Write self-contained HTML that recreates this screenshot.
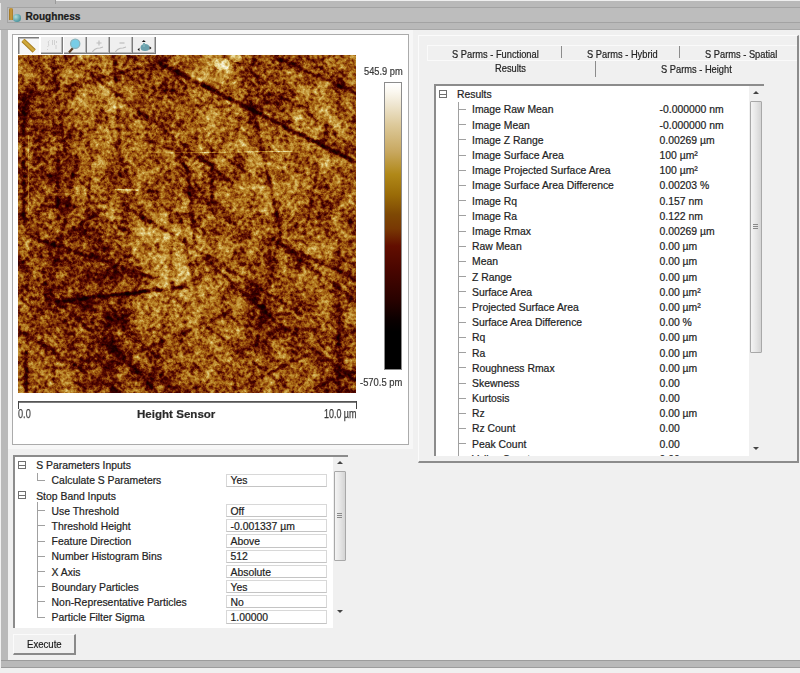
<!DOCTYPE html>
<html><head><meta charset="utf-8">
<style>
*{box-sizing:border-box;margin:0;padding:0}
html,body{width:800px;height:673px;overflow:hidden;background:#f0f0f0;font-family:"Liberation Sans",sans-serif;color:#222}
.a{position:absolute}
.t{position:absolute;white-space:nowrap;line-height:1;-webkit-text-stroke:0.2px currentColor}
.pm{position:absolute;width:8px;height:8px;border:1px solid #707070}
.pm::after{content:"";position:absolute;left:0;top:3px;width:6px;height:1px;background:#707070}
.vb{position:absolute;width:101.5px;height:13.2px;border:1px solid #d8d8d8;border-bottom-color:#c4c4c4}
.tri-up{position:absolute;width:0;height:0;border-left:3px solid transparent;border-right:3px solid transparent;border-bottom:3px solid #444}
.tri-dn{position:absolute;width:0;height:0;border-left:3px solid transparent;border-right:3px solid transparent;border-top:3px solid #444}
.grip{position:absolute;width:5px;height:6px;background:repeating-linear-gradient(180deg,#8a8a8a 0 1px,transparent 1px 2px)}
</style></head><body>
<!-- top gray frame -->
<div class="a" style="left:0;top:0;width:800px;height:30px;background:#b9b9b9"></div>
<div class="a" style="left:56px;top:0;width:744px;height:1px;background:#efefef"></div>
<div class="a" style="left:55px;top:0;width:1px;height:4px;background:#9a9a9a"></div>
<div class="a" style="left:0;top:3px;width:1px;height:17px;background:#eaeaea"></div>
<div class="a" style="left:7px;top:7px;width:793px;height:16px;background:#bdbdbd;border-top:1px solid #a3a3a3;border-bottom:1px solid #a3a3a3;border-left:1px solid #a3a3a3"></div>
<div class="a" style="left:0;top:29px;width:800px;height:1px;background:#a8a8a8"></div>
<!-- left gray strip -->
<div class="a" style="left:1px;top:30px;width:7px;height:637px;background:#b9b9b9"></div>
<div class="a" style="left:0;top:30px;width:1px;height:643px;background:#f0f0f0"></div>
<!-- bottom bar -->
<div class="a" style="left:1px;top:660px;width:799px;height:8px;background:#b9b9b9;border-top:1px solid #9c9c9c;border-bottom:1px solid #9c9c9c"></div>

<!-- title -->
<div class="a" style="left:9px;top:8px;width:3.5px;height:12px;border-radius:1.5px 1.5px 0 0;background:linear-gradient(90deg,#9a7020,#d0a040,#a07828)"></div>
<div class="a" style="left:13px;top:14px;width:7.5px;height:7.5px;border-radius:50%;background:radial-gradient(circle at 35% 35%,#b0dcdc,#5aa0a8 60%,#3a8088)"></div>
<div class="t" style="left:25.5px;top:12px;font-size:10.1px;font-weight:bold;color:#1a1a1a">Roughness</div>

<!-- image panel -->
<div class="a" style="left:8px;top:30px;width:405px;height:419px;background:#f7f7f7"></div>
<div class="a" style="left:12px;top:34px;width:397px;height:411px;background:#fff;border:1px solid #ababab"></div>

<!--AFM--><svg class="a" style="left:18px;top:55px" width="338" height="338" viewBox="0 0 338 338">
<defs>
<filter id="afmb" x="-40" y="-40" width="418" height="418" filterUnits="userSpaceOnUse" color-interpolation-filters="sRGB">
<feGaussianBlur in="SourceGraphic" stdDeviation="11"/>
</filter>
<filter id="afml" x="-40" y="-40" width="418" height="418" filterUnits="userSpaceOnUse" color-interpolation-filters="sRGB">
<feGaussianBlur in="SourceGraphic" stdDeviation="0.9"/>
</filter>
<filter id="afml2" x="-40" y="-40" width="418" height="418" filterUnits="userSpaceOnUse" color-interpolation-filters="sRGB">
<feGaussianBlur in="SourceGraphic" stdDeviation="0.4"/>
</filter>
<filter id="afmf" x="0" y="0" width="338" height="338" filterUnits="userSpaceOnUse" color-interpolation-filters="sRGB">
<feTurbulence type="fractalNoise" baseFrequency="0.26" numOctaves="3" seed="7" result="n1"/>
<feColorMatrix in="n1" type="matrix" values="1 0 0 0 0 1 0 0 0 0 1 0 0 0 0 0 0 0 0 1" result="g1"/>
<feTurbulence type="fractalNoise" baseFrequency="0.07" numOctaves="2" seed="3" result="n2"/>
<feColorMatrix in="n2" type="matrix" values="1 0 0 0 0 1 0 0 0 0 1 0 0 0 0 0 0 0 0 1" result="g2"/>
<feComposite in="g1" in2="g2" operator="arithmetic" k1="0" k2="0.5" k3="0.38" k4="0" result="h1"/>
<feComposite in="h1" in2="SourceGraphic" operator="arithmetic" k1="0" k2="1" k3="0.8" k4="-0.272" result="h"/>
<feComponentTransfer in="h" result="m"><feFuncR type="table" tableValues="0.000 0.010 0.020 0.031 0.041 0.051 0.061 0.071 0.082 0.092 0.102 0.131 0.159 0.188 0.217 0.245 0.282 0.322 0.361 0.416 0.471 0.520 0.569 0.612 0.651 0.690 0.721 0.749 0.777 0.805 0.827 0.850 0.872 0.895 0.918 0.931 0.945 0.959 0.973 0.986 1.000"/><feFuncG type="table" tableValues="0.000 0.000 0.000 0.000 0.000 0.000 0.000 0.000 0.000 0.000 0.000 0.000 0.000 0.000 0.000 0.000 0.016 0.035 0.055 0.114 0.173 0.228 0.284 0.341 0.400 0.459 0.507 0.553 0.599 0.644 0.688 0.732 0.775 0.819 0.863 0.886 0.908 0.931 0.954 0.977 1.000"/><feFuncB type="table" tableValues="0.000 0.000 0.000 0.000 0.000 0.000 0.000 0.000 0.000 0.000 0.000 0.000 0.000 0.000 0.000 0.000 0.002 0.005 0.008 0.020 0.031 0.038 0.044 0.062 0.087 0.113 0.153 0.196 0.240 0.287 0.352 0.417 0.482 0.547 0.612 0.676 0.741 0.806 0.871 0.935 1.000"/></feComponentTransfer>
<feGaussianBlur in="m" stdDeviation="0.5"/>
</filter>
</defs>
<g filter="url(#afmf)"><g filter="url(#afmb)"><rect x="-28.2" y="-28.2" width="28.7" height="28.7" fill="rgb(128,128,128)"/><rect x="0.0" y="-28.2" width="28.7" height="28.7" fill="rgb(128,128,128)"/><rect x="28.2" y="-28.2" width="28.7" height="28.7" fill="rgb(115,115,115)"/><rect x="56.3" y="-28.2" width="28.7" height="28.7" fill="rgb(140,140,140)"/><rect x="84.5" y="-28.2" width="28.7" height="28.7" fill="rgb(140,140,140)"/><rect x="112.7" y="-28.2" width="28.7" height="28.7" fill="rgb(102,102,102)"/><rect x="140.8" y="-28.2" width="28.7" height="28.7" fill="rgb(115,115,115)"/><rect x="169.0" y="-28.2" width="28.7" height="28.7" fill="rgb(153,153,153)"/><rect x="197.2" y="-28.2" width="28.7" height="28.7" fill="rgb(153,153,153)"/><rect x="225.3" y="-28.2" width="28.7" height="28.7" fill="rgb(115,115,115)"/><rect x="253.5" y="-28.2" width="28.7" height="28.7" fill="rgb(128,128,128)"/><rect x="281.7" y="-28.2" width="28.7" height="28.7" fill="rgb(128,128,128)"/><rect x="309.8" y="-28.2" width="28.7" height="28.7" fill="rgb(128,128,128)"/><rect x="338.0" y="-28.2" width="28.7" height="28.7" fill="rgb(128,128,128)"/><rect x="-28.2" y="0.0" width="28.7" height="28.7" fill="rgb(128,128,128)"/><rect x="0.0" y="0.0" width="28.7" height="28.7" fill="rgb(128,128,128)"/><rect x="28.2" y="0.0" width="28.7" height="28.7" fill="rgb(115,115,115)"/><rect x="56.3" y="0.0" width="28.7" height="28.7" fill="rgb(140,140,140)"/><rect x="84.5" y="0.0" width="28.7" height="28.7" fill="rgb(140,140,140)"/><rect x="112.7" y="0.0" width="28.7" height="28.7" fill="rgb(102,102,102)"/><rect x="140.8" y="0.0" width="28.7" height="28.7" fill="rgb(115,115,115)"/><rect x="169.0" y="0.0" width="28.7" height="28.7" fill="rgb(153,153,153)"/><rect x="197.2" y="0.0" width="28.7" height="28.7" fill="rgb(153,153,153)"/><rect x="225.3" y="0.0" width="28.7" height="28.7" fill="rgb(115,115,115)"/><rect x="253.5" y="0.0" width="28.7" height="28.7" fill="rgb(128,128,128)"/><rect x="281.7" y="0.0" width="28.7" height="28.7" fill="rgb(128,128,128)"/><rect x="309.8" y="0.0" width="28.7" height="28.7" fill="rgb(128,128,128)"/><rect x="338.0" y="0.0" width="28.7" height="28.7" fill="rgb(128,128,128)"/><rect x="-28.2" y="28.2" width="28.7" height="28.7" fill="rgb(89,89,89)"/><rect x="0.0" y="28.2" width="28.7" height="28.7" fill="rgb(89,89,89)"/><rect x="28.2" y="28.2" width="28.7" height="28.7" fill="rgb(128,128,128)"/><rect x="56.3" y="28.2" width="28.7" height="28.7" fill="rgb(140,140,140)"/><rect x="84.5" y="28.2" width="28.7" height="28.7" fill="rgb(166,166,166)"/><rect x="112.7" y="28.2" width="28.7" height="28.7" fill="rgb(115,115,115)"/><rect x="140.8" y="28.2" width="28.7" height="28.7" fill="rgb(115,115,115)"/><rect x="169.0" y="28.2" width="28.7" height="28.7" fill="rgb(153,153,153)"/><rect x="197.2" y="28.2" width="28.7" height="28.7" fill="rgb(140,140,140)"/><rect x="225.3" y="28.2" width="28.7" height="28.7" fill="rgb(102,102,102)"/><rect x="253.5" y="28.2" width="28.7" height="28.7" fill="rgb(115,115,115)"/><rect x="281.7" y="28.2" width="28.7" height="28.7" fill="rgb(153,153,153)"/><rect x="309.8" y="28.2" width="28.7" height="28.7" fill="rgb(128,128,128)"/><rect x="338.0" y="28.2" width="28.7" height="28.7" fill="rgb(128,128,128)"/><rect x="-28.2" y="56.3" width="28.7" height="28.7" fill="rgb(102,102,102)"/><rect x="0.0" y="56.3" width="28.7" height="28.7" fill="rgb(102,102,102)"/><rect x="28.2" y="56.3" width="28.7" height="28.7" fill="rgb(115,115,115)"/><rect x="56.3" y="56.3" width="28.7" height="28.7" fill="rgb(140,140,140)"/><rect x="84.5" y="56.3" width="28.7" height="28.7" fill="rgb(153,153,153)"/><rect x="112.7" y="56.3" width="28.7" height="28.7" fill="rgb(128,128,128)"/><rect x="140.8" y="56.3" width="28.7" height="28.7" fill="rgb(115,115,115)"/><rect x="169.0" y="56.3" width="28.7" height="28.7" fill="rgb(140,140,140)"/><rect x="197.2" y="56.3" width="28.7" height="28.7" fill="rgb(153,153,153)"/><rect x="225.3" y="56.3" width="28.7" height="28.7" fill="rgb(128,128,128)"/><rect x="253.5" y="56.3" width="28.7" height="28.7" fill="rgb(140,140,140)"/><rect x="281.7" y="56.3" width="28.7" height="28.7" fill="rgb(166,166,166)"/><rect x="309.8" y="56.3" width="28.7" height="28.7" fill="rgb(140,140,140)"/><rect x="338.0" y="56.3" width="28.7" height="28.7" fill="rgb(140,140,140)"/><rect x="-28.2" y="84.5" width="28.7" height="28.7" fill="rgb(115,115,115)"/><rect x="0.0" y="84.5" width="28.7" height="28.7" fill="rgb(115,115,115)"/><rect x="28.2" y="84.5" width="28.7" height="28.7" fill="rgb(102,102,102)"/><rect x="56.3" y="84.5" width="28.7" height="28.7" fill="rgb(153,153,153)"/><rect x="84.5" y="84.5" width="28.7" height="28.7" fill="rgb(140,140,140)"/><rect x="112.7" y="84.5" width="28.7" height="28.7" fill="rgb(128,128,128)"/><rect x="140.8" y="84.5" width="28.7" height="28.7" fill="rgb(140,140,140)"/><rect x="169.0" y="84.5" width="28.7" height="28.7" fill="rgb(128,128,128)"/><rect x="197.2" y="84.5" width="28.7" height="28.7" fill="rgb(140,140,140)"/><rect x="225.3" y="84.5" width="28.7" height="28.7" fill="rgb(140,140,140)"/><rect x="253.5" y="84.5" width="28.7" height="28.7" fill="rgb(140,140,140)"/><rect x="281.7" y="84.5" width="28.7" height="28.7" fill="rgb(140,140,140)"/><rect x="309.8" y="84.5" width="28.7" height="28.7" fill="rgb(128,128,128)"/><rect x="338.0" y="84.5" width="28.7" height="28.7" fill="rgb(128,128,128)"/><rect x="-28.2" y="112.7" width="28.7" height="28.7" fill="rgb(115,115,115)"/><rect x="0.0" y="112.7" width="28.7" height="28.7" fill="rgb(115,115,115)"/><rect x="28.2" y="112.7" width="28.7" height="28.7" fill="rgb(115,115,115)"/><rect x="56.3" y="112.7" width="28.7" height="28.7" fill="rgb(128,128,128)"/><rect x="84.5" y="112.7" width="28.7" height="28.7" fill="rgb(115,115,115)"/><rect x="112.7" y="112.7" width="28.7" height="28.7" fill="rgb(128,128,128)"/><rect x="140.8" y="112.7" width="28.7" height="28.7" fill="rgb(128,128,128)"/><rect x="169.0" y="112.7" width="28.7" height="28.7" fill="rgb(115,115,115)"/><rect x="197.2" y="112.7" width="28.7" height="28.7" fill="rgb(128,128,128)"/><rect x="225.3" y="112.7" width="28.7" height="28.7" fill="rgb(153,153,153)"/><rect x="253.5" y="112.7" width="28.7" height="28.7" fill="rgb(153,153,153)"/><rect x="281.7" y="112.7" width="28.7" height="28.7" fill="rgb(128,128,128)"/><rect x="309.8" y="112.7" width="28.7" height="28.7" fill="rgb(128,128,128)"/><rect x="338.0" y="112.7" width="28.7" height="28.7" fill="rgb(128,128,128)"/><rect x="-28.2" y="140.8" width="28.7" height="28.7" fill="rgb(128,128,128)"/><rect x="0.0" y="140.8" width="28.7" height="28.7" fill="rgb(128,128,128)"/><rect x="28.2" y="140.8" width="28.7" height="28.7" fill="rgb(115,115,115)"/><rect x="56.3" y="140.8" width="28.7" height="28.7" fill="rgb(128,128,128)"/><rect x="84.5" y="140.8" width="28.7" height="28.7" fill="rgb(140,140,140)"/><rect x="112.7" y="140.8" width="28.7" height="28.7" fill="rgb(128,128,128)"/><rect x="140.8" y="140.8" width="28.7" height="28.7" fill="rgb(128,128,128)"/><rect x="169.0" y="140.8" width="28.7" height="28.7" fill="rgb(128,128,128)"/><rect x="197.2" y="140.8" width="28.7" height="28.7" fill="rgb(128,128,128)"/><rect x="225.3" y="140.8" width="28.7" height="28.7" fill="rgb(140,140,140)"/><rect x="253.5" y="140.8" width="28.7" height="28.7" fill="rgb(140,140,140)"/><rect x="281.7" y="140.8" width="28.7" height="28.7" fill="rgb(115,115,115)"/><rect x="309.8" y="140.8" width="28.7" height="28.7" fill="rgb(128,128,128)"/><rect x="338.0" y="140.8" width="28.7" height="28.7" fill="rgb(128,128,128)"/><rect x="-28.2" y="169.0" width="28.7" height="28.7" fill="rgb(128,128,128)"/><rect x="0.0" y="169.0" width="28.7" height="28.7" fill="rgb(128,128,128)"/><rect x="28.2" y="169.0" width="28.7" height="28.7" fill="rgb(115,115,115)"/><rect x="56.3" y="169.0" width="28.7" height="28.7" fill="rgb(102,102,102)"/><rect x="84.5" y="169.0" width="28.7" height="28.7" fill="rgb(115,115,115)"/><rect x="112.7" y="169.0" width="28.7" height="28.7" fill="rgb(166,166,166)"/><rect x="140.8" y="169.0" width="28.7" height="28.7" fill="rgb(178,178,178)"/><rect x="169.0" y="169.0" width="28.7" height="28.7" fill="rgb(140,140,140)"/><rect x="197.2" y="169.0" width="28.7" height="28.7" fill="rgb(128,128,128)"/><rect x="225.3" y="169.0" width="28.7" height="28.7" fill="rgb(115,115,115)"/><rect x="253.5" y="169.0" width="28.7" height="28.7" fill="rgb(128,128,128)"/><rect x="281.7" y="169.0" width="28.7" height="28.7" fill="rgb(140,140,140)"/><rect x="309.8" y="169.0" width="28.7" height="28.7" fill="rgb(128,128,128)"/><rect x="338.0" y="169.0" width="28.7" height="28.7" fill="rgb(128,128,128)"/><rect x="-28.2" y="197.2" width="28.7" height="28.7" fill="rgb(115,115,115)"/><rect x="0.0" y="197.2" width="28.7" height="28.7" fill="rgb(115,115,115)"/><rect x="28.2" y="197.2" width="28.7" height="28.7" fill="rgb(115,115,115)"/><rect x="56.3" y="197.2" width="28.7" height="28.7" fill="rgb(102,102,102)"/><rect x="84.5" y="197.2" width="28.7" height="28.7" fill="rgb(89,89,89)"/><rect x="112.7" y="197.2" width="28.7" height="28.7" fill="rgb(140,140,140)"/><rect x="140.8" y="197.2" width="28.7" height="28.7" fill="rgb(178,178,178)"/><rect x="169.0" y="197.2" width="28.7" height="28.7" fill="rgb(140,140,140)"/><rect x="197.2" y="197.2" width="28.7" height="28.7" fill="rgb(140,140,140)"/><rect x="225.3" y="197.2" width="28.7" height="28.7" fill="rgb(128,128,128)"/><rect x="253.5" y="197.2" width="28.7" height="28.7" fill="rgb(128,128,128)"/><rect x="281.7" y="197.2" width="28.7" height="28.7" fill="rgb(140,140,140)"/><rect x="309.8" y="197.2" width="28.7" height="28.7" fill="rgb(128,128,128)"/><rect x="338.0" y="197.2" width="28.7" height="28.7" fill="rgb(128,128,128)"/><rect x="-28.2" y="225.3" width="28.7" height="28.7" fill="rgb(115,115,115)"/><rect x="0.0" y="225.3" width="28.7" height="28.7" fill="rgb(115,115,115)"/><rect x="28.2" y="225.3" width="28.7" height="28.7" fill="rgb(102,102,102)"/><rect x="56.3" y="225.3" width="28.7" height="28.7" fill="rgb(102,102,102)"/><rect x="84.5" y="225.3" width="28.7" height="28.7" fill="rgb(102,102,102)"/><rect x="112.7" y="225.3" width="28.7" height="28.7" fill="rgb(140,140,140)"/><rect x="140.8" y="225.3" width="28.7" height="28.7" fill="rgb(166,166,166)"/><rect x="169.0" y="225.3" width="28.7" height="28.7" fill="rgb(153,153,153)"/><rect x="197.2" y="225.3" width="28.7" height="28.7" fill="rgb(128,128,128)"/><rect x="225.3" y="225.3" width="28.7" height="28.7" fill="rgb(102,102,102)"/><rect x="253.5" y="225.3" width="28.7" height="28.7" fill="rgb(115,115,115)"/><rect x="281.7" y="225.3" width="28.7" height="28.7" fill="rgb(140,140,140)"/><rect x="309.8" y="225.3" width="28.7" height="28.7" fill="rgb(115,115,115)"/><rect x="338.0" y="225.3" width="28.7" height="28.7" fill="rgb(115,115,115)"/><rect x="-28.2" y="253.5" width="28.7" height="28.7" fill="rgb(115,115,115)"/><rect x="0.0" y="253.5" width="28.7" height="28.7" fill="rgb(115,115,115)"/><rect x="28.2" y="253.5" width="28.7" height="28.7" fill="rgb(115,115,115)"/><rect x="56.3" y="253.5" width="28.7" height="28.7" fill="rgb(102,102,102)"/><rect x="84.5" y="253.5" width="28.7" height="28.7" fill="rgb(89,89,89)"/><rect x="112.7" y="253.5" width="28.7" height="28.7" fill="rgb(140,140,140)"/><rect x="140.8" y="253.5" width="28.7" height="28.7" fill="rgb(153,153,153)"/><rect x="169.0" y="253.5" width="28.7" height="28.7" fill="rgb(140,140,140)"/><rect x="197.2" y="253.5" width="28.7" height="28.7" fill="rgb(140,140,140)"/><rect x="225.3" y="253.5" width="28.7" height="28.7" fill="rgb(89,89,89)"/><rect x="253.5" y="253.5" width="28.7" height="28.7" fill="rgb(115,115,115)"/><rect x="281.7" y="253.5" width="28.7" height="28.7" fill="rgb(115,115,115)"/><rect x="309.8" y="253.5" width="28.7" height="28.7" fill="rgb(128,128,128)"/><rect x="338.0" y="253.5" width="28.7" height="28.7" fill="rgb(128,128,128)"/><rect x="-28.2" y="281.7" width="28.7" height="28.7" fill="rgb(140,140,140)"/><rect x="0.0" y="281.7" width="28.7" height="28.7" fill="rgb(140,140,140)"/><rect x="28.2" y="281.7" width="28.7" height="28.7" fill="rgb(128,128,128)"/><rect x="56.3" y="281.7" width="28.7" height="28.7" fill="rgb(102,102,102)"/><rect x="84.5" y="281.7" width="28.7" height="28.7" fill="rgb(102,102,102)"/><rect x="112.7" y="281.7" width="28.7" height="28.7" fill="rgb(115,115,115)"/><rect x="140.8" y="281.7" width="28.7" height="28.7" fill="rgb(115,115,115)"/><rect x="169.0" y="281.7" width="28.7" height="28.7" fill="rgb(140,140,140)"/><rect x="197.2" y="281.7" width="28.7" height="28.7" fill="rgb(128,128,128)"/><rect x="225.3" y="281.7" width="28.7" height="28.7" fill="rgb(128,128,128)"/><rect x="253.5" y="281.7" width="28.7" height="28.7" fill="rgb(128,128,128)"/><rect x="281.7" y="281.7" width="28.7" height="28.7" fill="rgb(115,115,115)"/><rect x="309.8" y="281.7" width="28.7" height="28.7" fill="rgb(115,115,115)"/><rect x="338.0" y="281.7" width="28.7" height="28.7" fill="rgb(115,115,115)"/><rect x="-28.2" y="309.8" width="28.7" height="28.7" fill="rgb(128,128,128)"/><rect x="0.0" y="309.8" width="28.7" height="28.7" fill="rgb(128,128,128)"/><rect x="28.2" y="309.8" width="28.7" height="28.7" fill="rgb(128,128,128)"/><rect x="56.3" y="309.8" width="28.7" height="28.7" fill="rgb(102,102,102)"/><rect x="84.5" y="309.8" width="28.7" height="28.7" fill="rgb(102,102,102)"/><rect x="112.7" y="309.8" width="28.7" height="28.7" fill="rgb(115,115,115)"/><rect x="140.8" y="309.8" width="28.7" height="28.7" fill="rgb(102,102,102)"/><rect x="169.0" y="309.8" width="28.7" height="28.7" fill="rgb(128,128,128)"/><rect x="197.2" y="309.8" width="28.7" height="28.7" fill="rgb(128,128,128)"/><rect x="225.3" y="309.8" width="28.7" height="28.7" fill="rgb(128,128,128)"/><rect x="253.5" y="309.8" width="28.7" height="28.7" fill="rgb(140,140,140)"/><rect x="281.7" y="309.8" width="28.7" height="28.7" fill="rgb(115,115,115)"/><rect x="309.8" y="309.8" width="28.7" height="28.7" fill="rgb(102,102,102)"/><rect x="338.0" y="309.8" width="28.7" height="28.7" fill="rgb(102,102,102)"/><rect x="-28.2" y="338.0" width="28.7" height="28.7" fill="rgb(128,128,128)"/><rect x="0.0" y="338.0" width="28.7" height="28.7" fill="rgb(128,128,128)"/><rect x="28.2" y="338.0" width="28.7" height="28.7" fill="rgb(128,128,128)"/><rect x="56.3" y="338.0" width="28.7" height="28.7" fill="rgb(102,102,102)"/><rect x="84.5" y="338.0" width="28.7" height="28.7" fill="rgb(102,102,102)"/><rect x="112.7" y="338.0" width="28.7" height="28.7" fill="rgb(115,115,115)"/><rect x="140.8" y="338.0" width="28.7" height="28.7" fill="rgb(102,102,102)"/><rect x="169.0" y="338.0" width="28.7" height="28.7" fill="rgb(128,128,128)"/><rect x="197.2" y="338.0" width="28.7" height="28.7" fill="rgb(128,128,128)"/><rect x="225.3" y="338.0" width="28.7" height="28.7" fill="rgb(128,128,128)"/><rect x="253.5" y="338.0" width="28.7" height="28.7" fill="rgb(140,140,140)"/><rect x="281.7" y="338.0" width="28.7" height="28.7" fill="rgb(115,115,115)"/><rect x="309.8" y="338.0" width="28.7" height="28.7" fill="rgb(102,102,102)"/><rect x="338.0" y="338.0" width="28.7" height="28.7" fill="rgb(102,102,102)"/></g><g filter="url(#afml)"><line x1="36" y1="247" x2="144" y2="234.5" stroke="#000" stroke-width="2.70" stroke-opacity="1.000"/><line x1="144" y1="234.5" x2="169" y2="232" stroke="#000" stroke-width="2.16" stroke-opacity="0.560"/><line x1="139" y1="7" x2="338" y2="107.4" stroke="#000" stroke-width="3.96" stroke-opacity="0.640"/><line x1="182" y1="29" x2="338" y2="107.4" stroke="#000" stroke-width="2.88" stroke-opacity="0.240"/><line x1="0" y1="44" x2="122" y2="13" stroke="#000" stroke-width="2.70" stroke-opacity="0.400"/><line x1="84" y1="51" x2="127" y2="169" stroke="#000" stroke-width="2.70" stroke-opacity="0.400"/><line x1="160" y1="101" x2="203" y2="169" stroke="#000" stroke-width="2.70" stroke-opacity="0.400"/><line x1="253" y1="0" x2="338" y2="38" stroke="#000" stroke-width="2.70" stroke-opacity="0.480"/><line x1="40" y1="97" x2="40" y2="169" stroke="#000" stroke-width="2.88" stroke-opacity="0.480"/><line x1="6" y1="42" x2="6" y2="169" stroke="#000" stroke-width="3.60" stroke-opacity="0.480"/><line x1="25" y1="186" x2="139" y2="224" stroke="#000" stroke-width="3.24" stroke-opacity="0.560"/><line x1="42" y1="249" x2="139" y2="334" stroke="#000" stroke-width="2.88" stroke-opacity="0.480"/><line x1="84" y1="279" x2="139" y2="338" stroke="#000" stroke-width="2.88" stroke-opacity="0.480"/><line x1="8.5" y1="296" x2="8.5" y2="338" stroke="#000" stroke-width="3.24" stroke-opacity="0.800"/><line x1="186" y1="203" x2="262" y2="270" stroke="#000" stroke-width="2.88" stroke-opacity="0.480"/><line x1="262" y1="270" x2="338" y2="325" stroke="#000" stroke-width="2.52" stroke-opacity="0.400"/><line x1="321" y1="169" x2="321" y2="338" stroke="#000" stroke-width="2.52" stroke-opacity="0.320"/><line x1="194" y1="95" x2="194" y2="151" stroke="#000" stroke-width="2.70" stroke-opacity="0.480"/><line x1="0" y1="275" x2="102" y2="338" stroke="#000" stroke-width="2.52" stroke-opacity="0.400"/><line x1="212" y1="338" x2="338" y2="275" stroke="#000" stroke-width="2.52" stroke-opacity="0.320"/><line x1="112" y1="0" x2="42" y2="145" stroke="#000" stroke-width="2.16" stroke-opacity="0.320"/><line x1="282" y1="0" x2="232" y2="338" stroke="#000" stroke-width="2.16" stroke-opacity="0.240"/><line x1="151.63408449517783" y1="118.58718764208567" x2="154.17449367745957" y2="259.8189453483296" stroke="#000" stroke-width="2.65" stroke-opacity="0.239"/><line x1="161.57802597091182" y1="159.84920500273597" x2="184.4722140213487" y2="265.95151386382213" stroke="#000" stroke-width="1.93" stroke-opacity="0.399"/><line x1="254.21588033619076" y1="-65.7330407245031" x2="214.54853386168685" y2="94.04414811051899" stroke="#000" stroke-width="2.69" stroke-opacity="0.232"/><line x1="-40.21780672868708" y1="158.97268535273238" x2="50.35830490661999" y2="198.21305057851126" stroke="#000" stroke-width="1.84" stroke-opacity="0.311"/><line x1="84.61204160872799" y1="312.3914107685765" x2="213.18699325117197" y2="257.0893281099511" stroke="#000" stroke-width="2.75" stroke-opacity="0.309"/><line x1="109.36860692374536" y1="251.95380968606037" x2="78.66951324904149" y2="422.46178182698463" stroke="#000" stroke-width="2.25" stroke-opacity="0.251"/><line x1="92.60131235659958" y1="-73.85828441004384" x2="102.78969202780107" y2="121.32937011255376" stroke="#000" stroke-width="2.36" stroke-opacity="0.437"/><line x1="231.97012820822388" y1="-39.915978067520385" x2="340.811278544472" y2="40.28435551708601" stroke="#000" stroke-width="3.21" stroke-opacity="0.294"/><line x1="20.241004018223954" y1="176.05251881693212" x2="29.132916413355822" y2="249.45900185326815" stroke="#000" stroke-width="2.28" stroke-opacity="0.439"/><line x1="223.91855466765253" y1="26.95013623124919" x2="288.51683482012845" y2="52.81223905636716" stroke="#000" stroke-width="2.95" stroke-opacity="0.237"/><line x1="155.1617247951574" y1="129.081006517946" x2="222.92179093346954" y2="173.3782106727446" stroke="#000" stroke-width="2.73" stroke-opacity="0.222"/><line x1="67.4003534740176" y1="14.589269462965845" x2="217.03044378456298" y2="129.3079254911786" stroke="#000" stroke-width="2.24" stroke-opacity="0.419"/><line x1="74.04150569615044" y1="95.34302282416883" x2="68.3986039935306" y2="171.1866318365399" stroke="#000" stroke-width="3.22" stroke-opacity="0.247"/><line x1="54.8757314279961" y1="245.81982829598525" x2="119.71989768645932" y2="276.51840199044324" stroke="#000" stroke-width="1.93" stroke-opacity="0.341"/><line x1="-11.96100179717692" y1="152.86761241849155" x2="176.23773581016908" y2="253.60026584289898" stroke="#000" stroke-width="2.50" stroke-opacity="0.339"/><line x1="216.0315840579965" y1="5.234136633271305" x2="369.73976737630574" y2="118.35739923311988" stroke="#000" stroke-width="2.16" stroke-opacity="0.241"/><line x1="169.7108856070131" y1="257.1856791759102" x2="330.1400019090431" y2="378.52803058423035" stroke="#000" stroke-width="2.67" stroke-opacity="0.300"/><line x1="23.305194402469567" y1="-72.47806890774802" x2="46.8904302002353" y2="98.63688377274511" stroke="#000" stroke-width="2.17" stroke-opacity="0.403"/><line x1="171.81970615837614" y1="79.86280799489066" x2="231.39151705586025" y2="118.49948622879162" stroke="#000" stroke-width="2.13" stroke-opacity="0.335"/><line x1="250.88386986672322" y1="180.07512139413137" x2="325.33844586438863" y2="235.19371723587943" stroke="#000" stroke-width="1.82" stroke-opacity="0.261"/><line x1="82.9178195890138" y1="-13.539402425883253" x2="218.37911191892596" y2="54.40737175628601" stroke="#000" stroke-width="1.99" stroke-opacity="0.285"/><line x1="230.02284684030792" y1="360.2863155447584" x2="372.2527486192853" y2="302.5272372798901" stroke="#000" stroke-width="2.00" stroke-opacity="0.201"/><line x1="-24.44628714072834" y1="316.31324364701186" x2="36.54276435840251" y2="298.9903741705324" stroke="#000" stroke-width="2.72" stroke-opacity="0.315"/><line x1="230.65554035690622" y1="35.91681698161453" x2="263.1610947621045" y2="179.6626184588775" stroke="#000" stroke-width="2.86" stroke-opacity="0.422"/><line x1="261.67157684771956" y1="181.06806703359953" x2="236.60000201787494" y2="294.62679157384196" stroke="#000" stroke-width="2.79" stroke-opacity="0.423"/><line x1="308.77574410019406" y1="66.54218179368719" x2="280.08870706628534" y2="215.45334218289054" stroke="#000" stroke-width="2.70" stroke-opacity="0.290"/><line x1="103.61981165220834" y1="148.58618958374205" x2="290.271119212113" y2="263.00783531914095" stroke="#000" stroke-width="3.07" stroke-opacity="0.378"/><line x1="45.47933320627196" y1="293.81671070661866" x2="217.10362712780545" y2="203.0690797401528" stroke="#000" stroke-width="1.92" stroke-opacity="0.384"/><line x1="-62.184884638054726" y1="249.62929529933206" x2="82.32280976906905" y2="156.8395435362277" stroke="#000" stroke-width="2.52" stroke-opacity="0.349"/><line x1="235.02178803843918" y1="50.307730132399726" x2="387.2120608070499" y2="122.6334986595142" stroke="#000" stroke-width="2.09" stroke-opacity="0.235"/><line x1="260.7315031076743" y1="190.0279599955261" x2="351.53629844195706" y2="256.12528316534576" stroke="#000" stroke-width="2.76" stroke-opacity="0.243"/><line x1="157.65936512319655" y1="212.8708708654462" x2="133.62584574932305" y2="331.97728709271615" stroke="#000" stroke-width="2.64" stroke-opacity="0.273"/><line x1="61.80614158659762" y1="82.35295294252072" x2="30.24905504851194" y2="253.25876718064887" stroke="#000" stroke-width="3.17" stroke-opacity="0.263"/><line x1="-0.5617846209146578" y1="126.7943656330961" x2="114.89292815116914" y2="177.84466341255825" stroke="#000" stroke-width="2.70" stroke-opacity="0.318"/><line x1="169" y1="110" x2="177" y2="190" stroke="#000" stroke-width="2.70" stroke-opacity="0.480"/><line x1="245" y1="182" x2="338" y2="224" stroke="#000" stroke-width="2.70" stroke-opacity="0.480"/><line x1="127" y1="85" x2="198" y2="110" stroke="#000" stroke-width="2.70" stroke-opacity="0.480"/></g><g filter="url(#afml2)"><line x1="99" y1="98" x2="182" y2="97.5" stroke="#fff" stroke-width="1" stroke-opacity="0.22"/><line x1="182" y1="97.5" x2="274.6" y2="96.3" stroke="#fff" stroke-width="1" stroke-opacity="0.45"/><line x1="97" y1="134.5" x2="120.4" y2="135.2" stroke="#fff" stroke-width="1.3" stroke-opacity="0.6"/><line x1="10.5" y1="80" x2="10.5" y2="160" stroke="#fff" stroke-width="1.2" stroke-opacity="0.22"/><ellipse cx="204" cy="9" rx="8" ry="6" fill="#fff" fill-opacity="0.55"/><ellipse cx="218" cy="3" rx="6" ry="4" fill="#fff" fill-opacity="0.5"/></g></g>
</svg><!--/AFM-->

<!-- colorbar -->
<div class="a" style="left:384px;top:82px;width:18px;height:288px;border:1px solid #8c8c8c;background:linear-gradient(180deg,#ffffff 0%,#fbf8f0 3%,#f0e8d4 7%,#dcc898 15%,#c8a860 24%,#b08818 32%,#9a6c08 39%,#7e4804 46%,#783804 51%,#620e00 57%,#4a0600 65%,#280200 76%,#0a0000 83%,#000 87%,#000 100%)"></div>
<div class="t" style="left:364.3px;top:66.8px;font-size:10px;color:#3a3a3a;transform:scaleX(0.93);transform-origin:0 0">545.9 pm</div>
<div class="t" style="left:360.3px;top:378.3px;font-size:10px;color:#3a3a3a;transform:scaleX(0.94);transform-origin:0 0">-570.5 pm</div>

<!-- scale bar -->
<div class="a" style="left:18px;top:401px;width:339px;height:2px;background:linear-gradient(#555 60%,#bbb)"></div>
<div class="a" style="left:18px;top:401px;width:1.3px;height:7.5px;background:#444"></div>
<div class="a" style="left:355.8px;top:401px;width:1.3px;height:7.5px;background:#444"></div>
<div class="t" style="left:18.1px;top:408.4px;font-size:12.4px;color:#4a4a4a;-webkit-text-stroke:0.25px #4a4a4a;transform:scaleX(0.74);transform-origin:0 0">0.0</div>
<div class="t" style="left:323.6px;top:408.4px;font-size:12.4px;color:#3a3a3a;-webkit-text-stroke:0.25px #3a3a3a;transform:scaleX(0.72);transform-origin:0 0">10.0 µm</div>
<div class="t" style="left:137px;top:408.6px;font-size:11.8px;font-weight:bold;color:#2a2a2a;transform:scaleX(0.98);transform-origin:0 0">Height Sensor</div>


<!-- toolbar -->
<div class="a" style="left:18px;top:37px;width:21px;height:17px;background:#f6f6f6;border-top:1px solid #7c7c7c;border-left:1px solid #7c7c7c;box-shadow:inset 1px 1px 0 #b8b8b8"></div>
<div class="a" style="left:41px;top:37px;width:22px;height:17px;background:#efefef;border-right:1px solid #7c7c7c;border-bottom:1px solid #7c7c7c;box-shadow:inset -1px -1px 0 #b8b8b8"></div>
<div class="a" style="left:64px;top:37px;width:23px;height:17px;background:#efefef;border-right:1px solid #7c7c7c;border-bottom:1px solid #7c7c7c;box-shadow:inset -1px -1px 0 #b8b8b8"></div>
<div class="a" style="left:87px;top:37px;width:23px;height:17px;background:#efefef;border-right:1px solid #7c7c7c;border-bottom:1px solid #7c7c7c;box-shadow:inset -1px -1px 0 #b8b8b8"></div>
<div class="a" style="left:110px;top:37px;width:23px;height:17px;background:#efefef;border-right:1px solid #7c7c7c;border-bottom:1px solid #7c7c7c;box-shadow:inset -1px -1px 0 #b8b8b8"></div>
<div class="a" style="left:133px;top:37px;width:23px;height:17px;background:#efefef;border-right:1px solid #7c7c7c;border-bottom:1px solid #7c7c7c;box-shadow:inset -1px -1px 0 #b8b8b8"></div>
<svg class="a" style="left:0;top:0" width="170" height="60">
<line x1="23" y1="40.3" x2="34.2" y2="51" stroke="#a47a1c" stroke-width="4.6" stroke-linecap="butt"/>
<line x1="23" y1="40.3" x2="34.2" y2="51" stroke="#cfa83a" stroke-width="2.8"/>
<g stroke="#cdcdcd" stroke-width="0.9" fill="none"><path d="M49.5 40.5 q-2 1 -1 3 q1 2 -1 3.5"/><path d="M52.5 40 v5 M54.5 40 v5"/><path d="M56.5 41 v2 M56 45 v4"/><path d="M47 49.5 h1"/></g>
<line x1="73" y1="48" x2="69" y2="52.5" stroke="#5a3c22" stroke-width="2.2"/>
<circle cx="75.2" cy="43.8" r="4.6" fill="#78cde6" stroke="#8ab4bc" stroke-width="1.3"/>
<g stroke="#bdbdbd" stroke-width="1.2" fill="none"><path d="M92 53 q2 -5 8 -5 l3 -1"/><path d="M96.5 43 h5 M99 40.5 v5"/></g>
<g stroke="#bdbdbd" stroke-width="1.2" fill="none"><path d="M115 53 q2 -5 8 -5 l3 -1"/><path d="M119.5 43 h5"/></g>
<ellipse cx="145" cy="47.5" rx="4.5" ry="3.5" fill="#6aa0ac"/>
<rect x="143" y="43" width="2" height="4" fill="#7ab0b8"/>
<path d="M141.8 42 l2 -2 l2 2 z M137.5 49.5 l2 -1.8 v3.6 z M151.5 48 l-2 -1.8 v3.6 z" fill="#1c1c1c"/>
</svg>
<!-- params box -->
<div class="a" style="left:13px;top:455px;width:335px;height:173px;background:#fff;box-shadow:inset 2px 2px 0 #8c8c8c;overflow:hidden;font-size:10.4px;color:#222">
<div class="a" style="left:24px;top:18px;width:1px;height:8px;background:#a0a0a0"></div>
<div class="a" style="left:24px;top:47px;width:1px;height:115px;background:#a0a0a0"></div>
<div class="t" style="left:23.2px;top:6.20px">S Parameters Inputs</div><div class="pm" style="left:4.8px;top:6.00px"></div>
<div class="t" style="left:38.6px;top:21.40px">Calculate S Parameters</div><div class="a" style="left:24px;top:24.70px;width:8px;height:1px;background:#a0a0a0"></div>
<div class="vb" style="left:212.5px;top:18.60px"><span class="t" style="left:4px;top:1.80px">Yes</span></div>
<div class="t" style="left:23.2px;top:36.60px">Stop Band Inputs</div><div class="pm" style="left:4.8px;top:36.40px"></div>
<div class="t" style="left:38.6px;top:51.80px">Use Threshold</div><div class="a" style="left:24px;top:55.10px;width:8px;height:1px;background:#a0a0a0"></div>
<div class="vb" style="left:212.5px;top:49.00px"><span class="t" style="left:4px;top:1.80px">Off</span></div>
<div class="t" style="left:38.6px;top:67.00px">Threshold Height</div><div class="a" style="left:24px;top:70.30px;width:8px;height:1px;background:#a0a0a0"></div>
<div class="vb" style="left:212.5px;top:64.20px"><span class="t" style="left:4px;top:1.80px">-0.001337 µm</span></div>
<div class="t" style="left:38.6px;top:82.20px">Feature Direction</div><div class="a" style="left:24px;top:85.50px;width:8px;height:1px;background:#a0a0a0"></div>
<div class="vb" style="left:212.5px;top:79.40px"><span class="t" style="left:4px;top:1.80px">Above</span></div>
<div class="t" style="left:38.6px;top:97.40px">Number Histogram Bins</div><div class="a" style="left:24px;top:100.70px;width:8px;height:1px;background:#a0a0a0"></div>
<div class="vb" style="left:212.5px;top:94.60px"><span class="t" style="left:4px;top:1.80px">512</span></div>
<div class="t" style="left:38.6px;top:112.60px">X Axis</div><div class="a" style="left:24px;top:115.90px;width:8px;height:1px;background:#a0a0a0"></div>
<div class="vb" style="left:212.5px;top:109.80px"><span class="t" style="left:4px;top:1.80px">Absolute</span></div>
<div class="t" style="left:38.6px;top:127.80px">Boundary Particles</div><div class="a" style="left:24px;top:131.10px;width:8px;height:1px;background:#a0a0a0"></div>
<div class="vb" style="left:212.5px;top:125.00px"><span class="t" style="left:4px;top:1.80px">Yes</span></div>
<div class="t" style="left:38.6px;top:143.00px">Non-Representative Particles</div><div class="a" style="left:24px;top:146.30px;width:8px;height:1px;background:#a0a0a0"></div>
<div class="vb" style="left:212.5px;top:140.20px"><span class="t" style="left:4px;top:1.80px">No</span></div>
<div class="t" style="left:38.6px;top:158.20px">Particle Filter Sigma</div><div class="a" style="left:24px;top:161.50px;width:8px;height:1px;background:#a0a0a0"></div>
<div class="vb" style="left:212.5px;top:155.40px"><span class="t" style="left:4px;top:1.80px">1.00000</span></div>
<div class="a" style="left:320px;top:2px;width:15px;height:171px;background:#f0f0f0"></div>
<div class="tri-up" style="left:324px;top:6px"></div>
<div class="a" style="left:320.5px;top:16.4px;width:12.6px;height:89.6px;border:1px solid #a8a8a8;border-radius:1px;background:linear-gradient(90deg,#f4f4f4,#e6e6e6 50%,#d4d4d4)"></div>
<div class="grip" style="left:324px;top:58px"></div>
<div class="tri-dn" style="left:324px;top:155px"></div>
</div>

<!-- execute -->
<div class="a" style="left:13px;top:634px;width:63px;height:21px;background:#f0f0f0;border-top:1px solid #fbfbfb;border-left:1px solid #fbfbfb;border-right:2px solid #8a8a8a;border-bottom:2px solid #8a8a8a"></div>
<div class="t" style="left:27.1px;top:638.5px;font-size:11px;color:#1a1a1a;transform:scaleX(0.873);transform-origin:0 0">Execute</div>

<!-- right panel -->
<div class="a" style="left:418px;top:35px;width:381px;height:428px;border-left:1px solid #fbfbfb;border-top:1px solid #fbfbfb;border-right:2px solid #8c8c8c;border-bottom:2px solid #8c8c8c"></div>
<div class="a" style="left:427px;top:45px;width:370px;height:15px;border-top:1px solid #fafafa;border-left:1px solid #fafafa"></div>
<div class="a" style="left:561px;top:46px;width:1px;height:12px;background:#8c8c8c"></div>
<div class="a" style="left:679px;top:46px;width:1px;height:12px;background:#8c8c8c"></div>
<div class="a" style="left:595px;top:61px;width:1px;height:16px;background:#8c8c8c"></div>
<div class="a" style="left:427px;top:60px;width:370px;height:1px;background:#fafafa"></div>
<div class="t" style="left:452px;top:48.6px;font-size:10.5px;color:#222;transform:scaleX(0.885);transform-origin:0 0">S Parms - Functional</div>
<div class="t" style="left:587px;top:48.6px;font-size:10.5px;color:#222;transform:scaleX(0.885);transform-origin:0 0">S Parms - Hybrid</div>
<div class="t" style="left:704.5px;top:48.6px;font-size:10.5px;color:#222;transform:scaleX(0.885);transform-origin:0 0">S Parms - Spatial</div>
<div class="t" style="left:494.5px;top:62.6px;font-size:10.5px;color:#222;transform:scaleX(0.885);transform-origin:0 0">Results</div>
<div class="t" style="left:661px;top:63.6px;font-size:10.5px;color:#222;transform:scaleX(0.885);transform-origin:0 0">S Parms - Height</div>

<div class="a" style="left:434px;top:84px;width:330px;height:372px;background:#fff;box-shadow:inset 2px 2px 0 #8c8c8c;overflow:hidden;font-size:10.4px;color:#222">
<div class="pm" style="left:4.75px;top:6.25px"></div>
<div class="t" style="left:23px;top:6.1px">Results</div>
<div class="a" style="left:24px;top:18px;width:1px;height:360px;background:#a0a0a0"></div>
<div class="t" style="left:38px;top:21.49px">Image Raw Mean</div><div class="t" style="left:225.5px;top:21.49px">-0.000000 nm</div><div class="a" style="left:24px;top:25.09px;width:8px;height:1px;background:#a0a0a0"></div>
<div class="t" style="left:38px;top:36.68px">Image Mean</div><div class="t" style="left:225.5px;top:36.68px">-0.000000 nm</div><div class="a" style="left:24px;top:40.28px;width:8px;height:1px;background:#a0a0a0"></div>
<div class="t" style="left:38px;top:51.87px">Image Z Range</div><div class="t" style="left:225.5px;top:51.87px">0.00269 µm</div><div class="a" style="left:24px;top:55.47px;width:8px;height:1px;background:#a0a0a0"></div>
<div class="t" style="left:38px;top:67.06px">Image Surface Area</div><div class="t" style="left:225.5px;top:67.06px">100 µm²</div><div class="a" style="left:24px;top:70.66px;width:8px;height:1px;background:#a0a0a0"></div>
<div class="t" style="left:38px;top:82.25px">Image Projected Surface Area</div><div class="t" style="left:225.5px;top:82.25px">100 µm²</div><div class="a" style="left:24px;top:85.85px;width:8px;height:1px;background:#a0a0a0"></div>
<div class="t" style="left:38px;top:97.44px">Image Surface Area Difference</div><div class="t" style="left:225.5px;top:97.44px">0.00203 %</div><div class="a" style="left:24px;top:101.04px;width:8px;height:1px;background:#a0a0a0"></div>
<div class="t" style="left:38px;top:112.63px">Image Rq</div><div class="t" style="left:225.5px;top:112.63px">0.157 nm</div><div class="a" style="left:24px;top:116.23px;width:8px;height:1px;background:#a0a0a0"></div>
<div class="t" style="left:38px;top:127.82px">Image Ra</div><div class="t" style="left:225.5px;top:127.82px">0.122 nm</div><div class="a" style="left:24px;top:131.42px;width:8px;height:1px;background:#a0a0a0"></div>
<div class="t" style="left:38px;top:143.01px">Image Rmax</div><div class="t" style="left:225.5px;top:143.01px">0.00269 µm</div><div class="a" style="left:24px;top:146.61px;width:8px;height:1px;background:#a0a0a0"></div>
<div class="t" style="left:38px;top:158.20px">Raw Mean</div><div class="t" style="left:225.5px;top:158.20px">0.00 µm</div><div class="a" style="left:24px;top:161.80px;width:8px;height:1px;background:#a0a0a0"></div>
<div class="t" style="left:38px;top:173.39px">Mean</div><div class="t" style="left:225.5px;top:173.39px">0.00 µm</div><div class="a" style="left:24px;top:176.99px;width:8px;height:1px;background:#a0a0a0"></div>
<div class="t" style="left:38px;top:188.58px">Z Range</div><div class="t" style="left:225.5px;top:188.58px">0.00 µm</div><div class="a" style="left:24px;top:192.18px;width:8px;height:1px;background:#a0a0a0"></div>
<div class="t" style="left:38px;top:203.77px">Surface Area</div><div class="t" style="left:225.5px;top:203.77px">0.00 µm²</div><div class="a" style="left:24px;top:207.37px;width:8px;height:1px;background:#a0a0a0"></div>
<div class="t" style="left:38px;top:218.96px">Projected Surface Area</div><div class="t" style="left:225.5px;top:218.96px">0.00 µm²</div><div class="a" style="left:24px;top:222.56px;width:8px;height:1px;background:#a0a0a0"></div>
<div class="t" style="left:38px;top:234.15px">Surface Area Difference</div><div class="t" style="left:225.5px;top:234.15px">0.00 %</div><div class="a" style="left:24px;top:237.75px;width:8px;height:1px;background:#a0a0a0"></div>
<div class="t" style="left:38px;top:249.34px">Rq</div><div class="t" style="left:225.5px;top:249.34px">0.00 µm</div><div class="a" style="left:24px;top:252.94px;width:8px;height:1px;background:#a0a0a0"></div>
<div class="t" style="left:38px;top:264.53px">Ra</div><div class="t" style="left:225.5px;top:264.53px">0.00 µm</div><div class="a" style="left:24px;top:268.13px;width:8px;height:1px;background:#a0a0a0"></div>
<div class="t" style="left:38px;top:279.72px">Roughness Rmax</div><div class="t" style="left:225.5px;top:279.72px">0.00 µm</div><div class="a" style="left:24px;top:283.32px;width:8px;height:1px;background:#a0a0a0"></div>
<div class="t" style="left:38px;top:294.91px">Skewness</div><div class="t" style="left:225.5px;top:294.91px">0.00</div><div class="a" style="left:24px;top:298.51px;width:8px;height:1px;background:#a0a0a0"></div>
<div class="t" style="left:38px;top:310.10px">Kurtosis</div><div class="t" style="left:225.5px;top:310.10px">0.00</div><div class="a" style="left:24px;top:313.70px;width:8px;height:1px;background:#a0a0a0"></div>
<div class="t" style="left:38px;top:325.29px">Rz</div><div class="t" style="left:225.5px;top:325.29px">0.00 µm</div><div class="a" style="left:24px;top:328.89px;width:8px;height:1px;background:#a0a0a0"></div>
<div class="t" style="left:38px;top:340.48px">Rz Count</div><div class="t" style="left:225.5px;top:340.48px">0.00</div><div class="a" style="left:24px;top:344.08px;width:8px;height:1px;background:#a0a0a0"></div>
<div class="t" style="left:38px;top:355.67px">Peak Count</div><div class="t" style="left:225.5px;top:355.67px">0.00</div><div class="a" style="left:24px;top:359.27px;width:8px;height:1px;background:#a0a0a0"></div>
<div class="t" style="left:38px;top:370.86px">Valley Count</div><div class="t" style="left:225.5px;top:370.86px">0.00</div><div class="a" style="left:24px;top:374.46px;width:8px;height:1px;background:#a0a0a0"></div>
<div class="a" style="left:315px;top:2px;width:15px;height:370px;background:#f0f0f0"></div>
<div class="tri-up" style="left:319px;top:7px"></div>
<div class="a" style="left:315.5px;top:17.2px;width:12.5px;height:252px;border:1px solid #a8a8a8;border-radius:1px;background:linear-gradient(90deg,#f4f4f4,#e6e6e6 50%,#d4d4d4)"></div>
<div class="grip" style="left:319px;top:140px"></div>
<div class="tri-dn" style="left:319px;top:362.5px"></div>
</div>
</body></html>
